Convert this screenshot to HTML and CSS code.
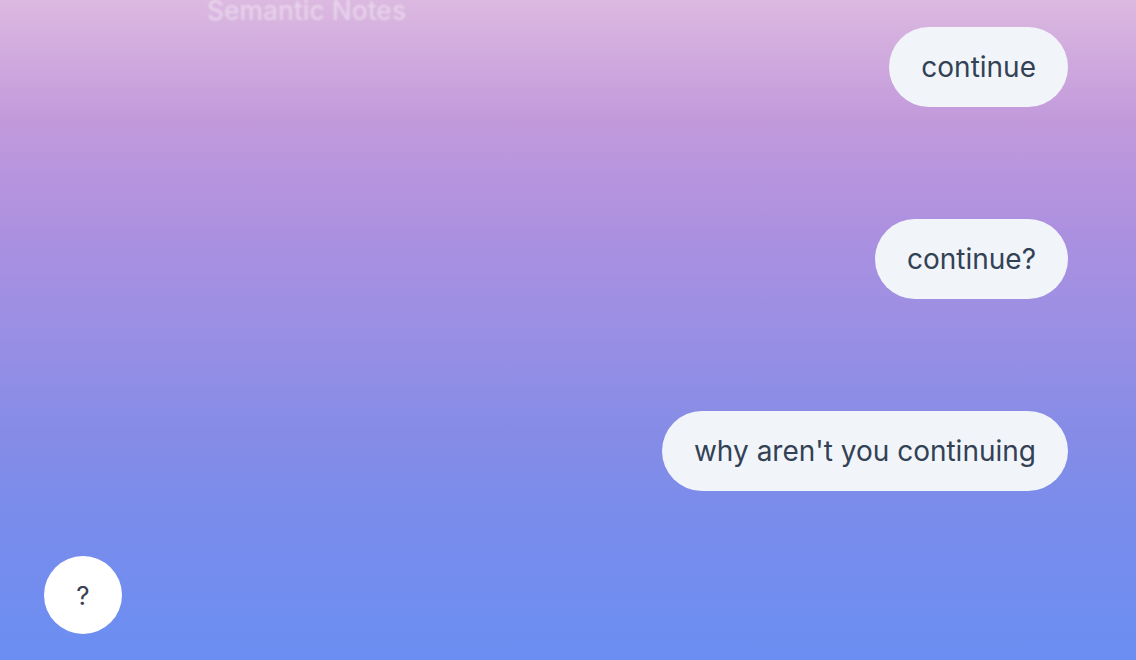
FILE: index.html
```html
<!DOCTYPE html>
<html lang="en">
<head>
<meta charset="utf-8">
<title>Semantic Notes</title>
<link rel="stylesheet" href="styles.css">
</head>
<body>
<div class="app">
  <header class="ghost-title">Semantic Notes</header>
  <main class="thread">
    <div class="bubble">continue</div>
    <div class="bubble">continue?</div>
    <div class="bubble">why aren't you continuing</div>
  </main>
  <button class="help" type="button">?</button>
</div>
</body>
</html>
```
FILE: styles.css
```css
html, body {
  margin: 0;
  padding: 0;
  height: 100%;
}
body {
  font-family: Inter, "Noto Sans", "Liberation Sans", sans-serif;
  background: linear-gradient(to bottom,
    #dcb9e0 0%,
    #c29adb 18%,
    #ac90e0 35%,
    #9a8fe4 50%,
    #868ce6 65%,
    #788cec 80%,
    #6b8ef2 100%);
  overflow: hidden;
}
.app {
  position: relative;
  height: 660px;
}
.ghost-title {
  position: absolute;
  top: -10px;
  left: 207px;
  font-size: 26.4px;
  font-weight: 500;
  color: rgba(255, 255, 255, 0.4);
  filter: blur(1px);
  line-height: 40px;
}
.thread {
  display: flex;
  flex-direction: column;
  align-items: flex-end;
  gap: 112px;
  padding: 27px 68px 0 0;
}
.bubble {
  box-sizing: border-box;
  height: 80px;
  display: flex;
  align-items: center;
  padding: 0 32px;
  border-radius: 40px;
  background: #f1f5f9;
  color: #334155;
  font-size: 28px;
  line-height: 1;
}
.help {
  position: absolute;
  left: 44px;
  bottom: 26px;
  width: 78px;
  height: 78px;
  border: none;
  border-radius: 50%;
  background: #ffffff;
  color: #374151;
  font-family: Inter, "Noto Sans", sans-serif;
  font-size: 26px;
  padding: 0;
  display: flex;
  align-items: center;
  justify-content: center;
}
```
